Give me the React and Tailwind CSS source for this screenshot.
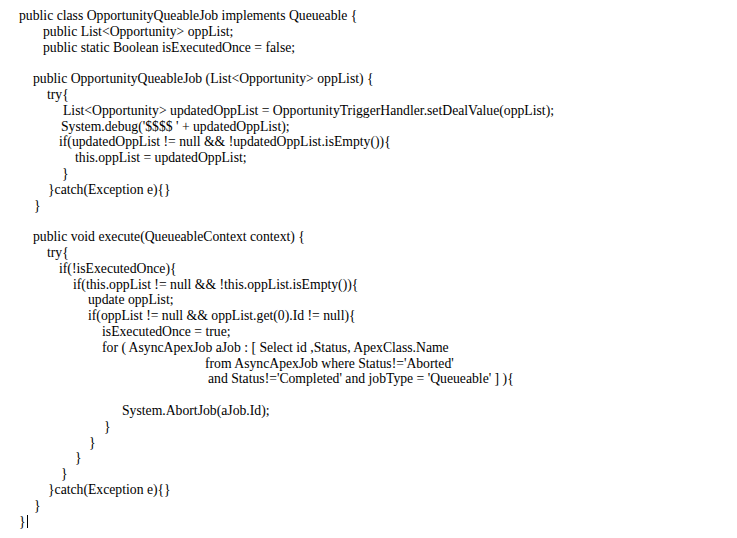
const LINES = [
  [19, 'public class OpportunityQueableJob implements Queueable {'],
  [43, 'public List<Opportunity> oppList;'],
  [43, 'public static Boolean isExecutedOnce = false;'],
  [0, ''],
  [33, 'public OpportunityQueableJob (List<Opportunity> oppList) {'],
  [47, 'try{'],
  [63, 'List<Opportunity> updatedOppList = OpportunityTriggerHandler.setDealValue(oppList);'],
  [61, "System.debug('$$$$ ' + updatedOppList);"],
  [59, 'if(updatedOppList != null && !updatedOppList.isEmpty()){'],
  [75, 'this.oppList = updatedOppList;'],
  [62, '}'],
  [48, '}catch(Exception e){}'],
  [34, '}'],
  [0, ''],
  [33, 'public void execute(QueueableContext context) {'],
  [47, 'try{'],
  [59, 'if(!isExecutedOnce){'],
  [73, 'if(this.oppList != null && !this.oppList.isEmpty()){'],
  [88, 'update oppList;'],
  [88, 'if(oppList != null && oppList.get(0).Id != null){'],
  [102, 'isExecutedOnce = true;'],
  [102, 'for ( AsyncApexJob aJob : [ Select id ,Status, ApexClass.Name'],
  [205, "from AsyncApexJob where Status!='Aborted'"],
  [208, "and Status!='Completed' and jobType = 'Queueable' ] ){"],
  [0, ''],
  [122, 'System.AbortJob(aJob.Id);'],
  [104, '}'],
  [89, '}'],
  [75, '}'],
  [61, '}'],
  [48, '}catch(Exception e){}'],
  [34, '}'],
];

export default function App() {
  return (
    <div className="w-[737px] h-[538px] bg-white overflow-hidden pt-[8px] text-black text-[13.7px] leading-[15.8px] font-['Liberation_Serif',serif]">
      {LINES.map(([x, t], i) => (
        <div key={i} className="h-[15.8px] whitespace-pre" style={{ paddingLeft: x }}>{t}</div>
      ))}
      <div className="h-[15.8px] whitespace-pre pl-[19px] flex items-center">
        <span>{'}'}</span>
        <span className="ml-[1px] w-px h-[13px] bg-black" />
      </div>
    </div>
  );
}
